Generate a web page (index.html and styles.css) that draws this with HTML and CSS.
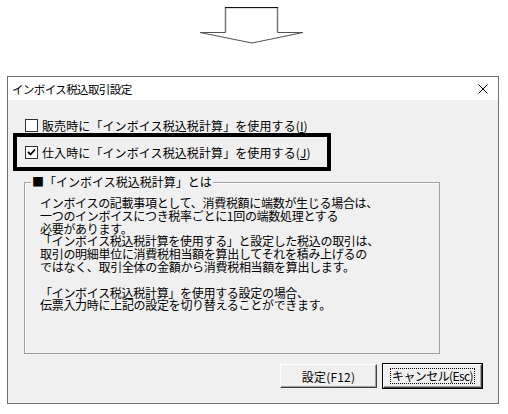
FILE: index.html
```html
<!DOCTYPE html>
<html lang="ja">
<head>
<meta charset="utf-8">
<title>インボイス税込取引設定</title>
<link rel="stylesheet" href="styles.css">
</head>
<body>
<div class="arrow">
  <svg width="106" height="38" viewBox="0 0 106 38">
    <polygon points="26.5,0.5 78.5,0.5 78.5,25.5 104,25.5 53,36 1,25.5 26.5,25.5" fill="#fff" stroke="none"/>
    <polyline points="26.5,25.5 26.5,0.5 78.5,0.5 78.5,25.5" fill="none" stroke="#777" stroke-width="1.5"/>
    <line x1="26" y1="0.5" x2="79" y2="0.5" stroke="#111" stroke-width="1"/>
    <polyline points="26.5,25.5 1,25.5 53,36 104,25.5 78.5,25.5" fill="none" stroke="#555" stroke-width="1.2"/>
  </svg>
</div>
<div class="dialog">
  <div class="titlebar">
    <span class="title">インボイス税込取引設定</span>
    <svg class="close" width="10" height="10" viewBox="0 0 10 10"><path d="M0.5 0.5 L9.5 9.5 M9.5 0.5 L0.5 9.5" stroke="#000" stroke-width="1"/></svg>
  </div>
  <div class="content">
    <div class="row first">
      <span class="check"></span>
      <span class="label">販売時に「インボイス税込税計算」を使用する(<u>I</u>)</span>
    </div>
    <div class="highlight">
      <div class="row">
        <span class="check checked"><svg width="9" height="9" viewBox="0 0 9 9"><path d="M1 4 L3.5 6.5 L8 1.5" fill="none" stroke="#000" stroke-width="1.8"/></svg></span>
        <span class="label">仕入時に「インボイス税込税計算」を使用する(<u>J</u>)</span>
      </div>
    </div>
    <div class="group">
      <div class="legend">■「インボイス税込税計算」とは</div>
      <p class="desc">インボイスの記載事項として、消費税額に端数が生じる場合は、<br>一つのインボイスにつき税率ごとに1回の端数処理とする<br>必要があります。<br>「インボイス税込税計算を使用する」と設定した税込の取引は、<br>取引の明細単位に消費税相当額を算出してそれを積み上げるの<br>ではなく、取引全体の金額から消費税相当額を算出します。<br><br>「インボイス税込税計算」を使用する設定の場合、<br>伝票入力時に上記の設定を切り替えることができます。</p>
    </div>
    <div class="buttons">
      <button class="btn">設定(F12)</button>
      <button class="btn default"><span class="focus">キャンセル(Esc)</span></button>
    </div>
  </div>
</div>
</body>
</html>
```

FILE: styles.css
```css
html, body {
  margin: 0;
  padding: 0;
  background: #fff;
}
body {
  font-family: "Noto Sans CJK JP", "Noto Sans", sans-serif;
  font-size: 12px;
  color: #000;
}
.arrow {
  padding: 7px 0 0 199px;
  height: 38px;
}
.arrow svg {
  display: block;
}
.dialog {
  margin: 31px 0 0 7px;
  width: 490px;
  height: 326px;
  border: 1px solid #707070;
  background: #f0f0f0;
  display: flex;
  flex-direction: column;
}
.titlebar {
  height: 23px;
  background: #fff;
  display: flex;
  align-items: center;
  justify-content: space-between;
  padding: 0 10px 0 4px;
}
.title {
  font-size: 11.5px;
  letter-spacing: -0.6px;
  color: #000;
}
.close {
  display: block;
}
.content {
  flex: 1;
  padding: 19px 0 0 5px;
  display: flex;
  flex-direction: column;
}
.row {
  display: flex;
  align-items: center;
  height: 13px;
  gap: 4px;
}
.row.first {
  margin-left: 12px;
}
.label {
  letter-spacing: 0.1px;
  white-space: nowrap;
  line-height: 13px;
}
.label u {
  text-decoration: underline;
  text-underline-offset: 1px;
}
.check {
  width: 11px;
  height: 11px;
  border: 1px solid #333;
  background: #fff;
  flex: none;
  display: flex;
  align-items: center;
  justify-content: center;
}
.check svg {
  display: block;
}
.highlight {
  margin-top: 1px;
  width: 302px;
  height: 30px;
  border: 4px solid #000;
  padding: 0 0 0 8px;
  display: flex;
  align-items: center;
  box-sizing: content-box;
}
.highlight .row {
  margin-top: 1px;
}
.group {
  margin: 11px 0 0 11px;
  width: 414px;
  height: 170px;
  border: 1px solid #a0a0a0;
  box-shadow: inset 1px 1px 0 #fff;
  position: relative;
}
.legend {
  position: absolute;
  top: -8px;
  left: 6px;
  background: #f0f0f0;
  padding: 0 1px;
  line-height: 14px;
  letter-spacing: 0;
  white-space: nowrap;
}
.desc {
  margin: 14px 0 0 15px;
  line-height: 12.8px;
  letter-spacing: -0.3px;
  white-space: nowrap;
}
.buttons {
  display: flex;
  justify-content: flex-end;
  gap: 6px;
  margin: 10px 16px 0 0;
}
.btn {
  font-family: "Noto Sans CJK JP", "Noto Sans", sans-serif;
  font-size: 12px;
  width: 97px;
  height: 24px;
  padding: 0;
  background: #f0f0f0;
  border: 1px solid;
  border-color: #fff #404040 #404040 #fff;
  box-shadow: inset -1px -1px 0 #a0a0a0;
  color: #000;
  letter-spacing: 0.2px;
  display: flex;
  align-items: center;
  justify-content: center;
}
.btn.default {
  width: 99px;
  outline: 1px solid #000;
  outline-offset: 0;
  border-color: #fff #404040 #404040 #fff;
}
.focus {
  border: 1px dotted #000;
  padding: 0 1px;
  line-height: 14px;
  letter-spacing: -0.6px;
  white-space: nowrap;
}
```
